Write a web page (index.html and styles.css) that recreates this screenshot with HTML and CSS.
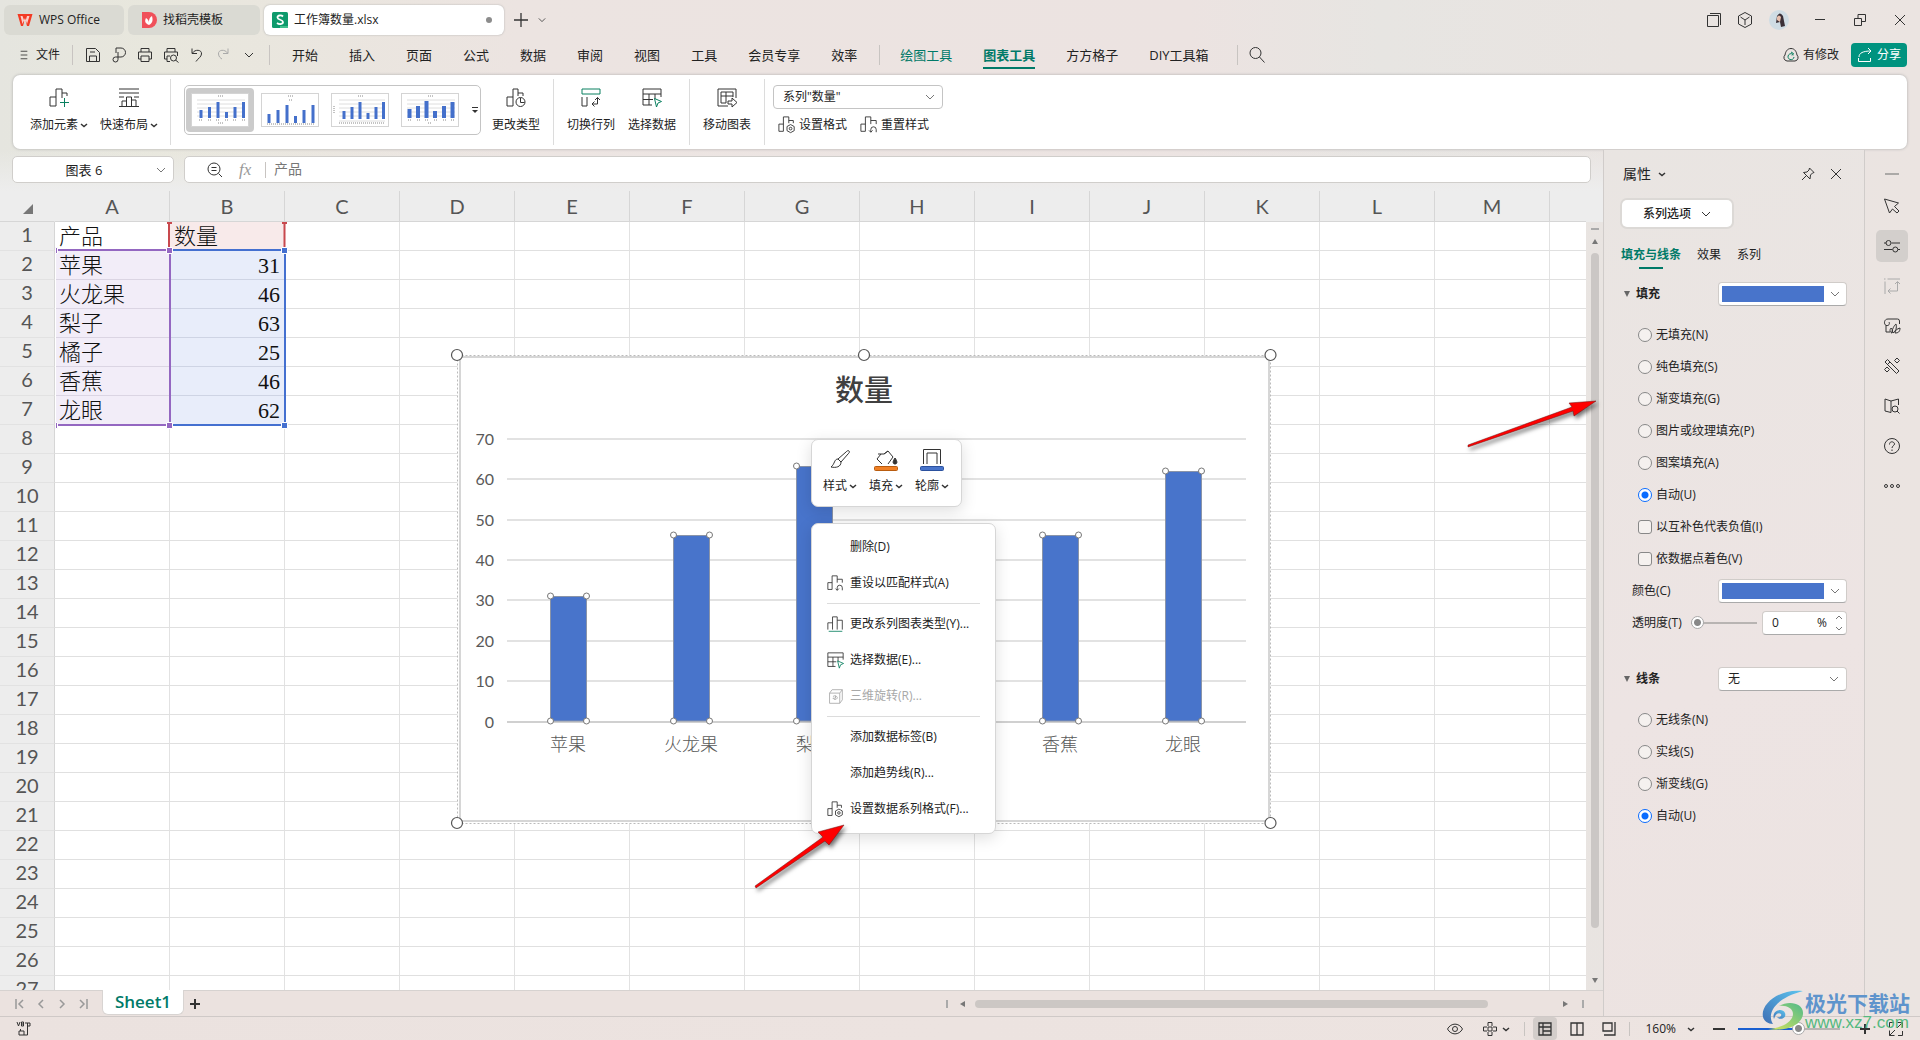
FILE: index.html
```html
<!DOCTYPE html>
<html lang="zh-CN">
<head>
<meta charset="utf-8">
<title>工作簿数量.xlsx</title>
<link rel="stylesheet" href="styles.css">
</head>
<body>
<svg class="defs" aria-hidden="true">
  <symbol id="bars-add" viewBox="0 0 20 20"><path d="M7 18H1V9h6M7 18V1h6v9M13 5h5v3"/><path class="green" d="M15.500 10v9M11 14.500h9"/></symbol>
  <symbol id="layout" viewBox="0 0 20 20"><path d="M0 1h20M0 5h20M0 18.500h20M3 18v-5h4.500M7.500 18V9h5v9M12.500 12H17v6M0 9h5M15 9h5"/></symbol>
  <symbol id="bars-type" viewBox="0 0 20 20"><path d="M7 18H1V9h6M7 18V1h5v7M12 5h5v3"/><circle cx="14.500" cy="14" r="4.500"/><path d="M14.500 10v4.500h4"/></symbol>
  <symbol id="swap" viewBox="0 0 20 20"><path class="green" d="M1 1h18v5H1z"/><path d="M1 9v9h5V9M11 16h5.500V9.500M14 12l2.500-2.500L19 12M13.500 13.500 11 16l2.500 2.500"/></symbol>
  <symbol id="pick" viewBox="0 0 20 20"><path d="M10 17H1V1h18v8M1 6h18M1 11.500h10M7 6v11M13 6v5"/><path class="green" d="m12.500 10.500 7 3-3.500 1.500-1.500 4z"/></symbol>
  <symbol id="move-chart" viewBox="0 0 20 20"><path d="M19 10V1H1v17h10M4 4h12v5M4 4v11h5V8h7M4 8h5M9 4v4M11 13h4v-3l5 4.500-5 4.500v-3h-4z"/></symbol>
  <symbol id="bars-set" viewBox="0 0 20 20"><path d="M6 17H1V9h5M6 17V1h6v7M12 5h5v3"/><path d="m14 9.500 4 2.200v4.600l-4 2.200-4-2.200v-4.600z"/><circle cx="14" cy="14" r="1.500"/></symbol>
  <symbol id="bars-reset" viewBox="0 0 20 20"><path d="M6 17H1V9h5M6 17V1h6v8M12 5h6v4M18 18v-3a3 3 0 0 0-6 0v3M10 16l2 2 2-2"/></symbol>
  <symbol id="bars-green" viewBox="0 0 20 20"><path d="M1 16V8h5.500M6.500 16V1H12v15M12 5h6v11"/><path class="green" d="M2 18h16"/></symbol>
  <symbol id="cube3d" viewBox="0 0 20 20"><path d="M3 6h12v12H3zM3 6l3-4h12l-3 4M18 2v12l-3 4M7 10c2-2 6 0 5 2s-4 2-5 0M10 9v3H7"/></symbol>
  <symbol id="chev" viewBox="0 0 10 10"><path d="m1 3 4 4 4-4"/></symbol>
  <symbol id="caret" viewBox="0 0 8 8"><path class="thick" d="m1 3 3 2.500L7 3"/></symbol>
  <symbol id="close" viewBox="0 0 12 12"><path d="m1 1 10 10M11 1 1 11"/></symbol>
  <symbol id="search" viewBox="0 0 18 18"><circle cx="7.500" cy="7" r="5.500"/><path d="m11.500 11 5 5.500"/></symbol>
</svg>

<header class="titlebar">
  <nav class="doc-tabs" aria-label="文档">
    <button class="doc-tab tab-home"><svg class="ic16" viewBox="0 0 16 16"><path d="M.5 2H13l2.500 0-3.500 12h-2L8 7l-2 7H4z" fill="#f33b24"/><path d="M3.500 4h2L8 11l2-7h2.500l-2.500 8L8 6 5.500 12z" fill="#fff" opacity=".75"/></svg>WPS Office</button>
    <button class="doc-tab tab-docer"><svg class="ic16" viewBox="0 0 16 16"><path d="M1 0h7a8 8 0 0 1 0 16H1z" fill="#f0505a"/><path d="M8 13c-5-2-4-5-3-7 2 1 3 3 3 5 0-3 0-5 3-7 1 4 1 7-3 9z" fill="#fff"/></svg>找稻壳模板</button>
    <button class="doc-tab tab-file active"><svg class="ic16" viewBox="0 0 16 16"><rect width="16" height="16" rx="1.500" fill="#0e9a6c"/><path d="M8 14h8v2H8z" fill="#3fc08d"/><path d="M11 4.500C9.500 3 5.500 3 5.500 5.500S11 7.500 11 10s-4 2.500-6 1" fill="none" stroke="#fff" stroke-width="1.800"/></svg>工作簿数量.xlsx<span class="dot"></span></button>
  </nav>
  <button class="plain" aria-label="新建"><svg class="ic14" viewBox="0 0 14 14"><path class="mid" d="M7 0v14M0 7h14"/></svg></button>
  <button class="plain" aria-label="更多"><svg class="ic8"><use href="#chev"/></svg></button>
  <div class="win-tools">
    <button class="plain w14" aria-label="标签"><svg class="ic14" viewBox="0 0 14 14"><path d="M.5 2.500h11v11H.5zM3 .5h10.500V12"/></svg></button>
    <button class="plain w14" aria-label="应用"><svg class="ic16" viewBox="0 0 16 16"><path d="m8 .5 6.500 3.500v8L8 15.500 1.500 12V4zM3.500 5 8 8l4.500-3M8 8v5"/></svg></button>
    <button class="plain avatar" aria-label="账户"><svg class="ic20" viewBox="0 0 20 20"><circle cx="10" cy="10" r="10" fill="#cfdce4" stroke="none"/><path d="M8 6q3-5 6 0l2 10-4 1-1-5-4 1z" fill="#3a3038" stroke="none"/><path d="M8 7q2-3 4 0l-1 5-3-2z" fill="#e6bfae" stroke="none"/></svg></button>
    <button class="plain" aria-label="最小化"><svg class="ic12" viewBox="0 0 12 12"><path d="M1 5.500h10"/></svg></button>
    <button class="plain" aria-label="还原"><svg class="ic12" viewBox="0 0 12 12"><path d="M.5 4.500h7v7h-7zM4 4.500v-4h7.500v7H8"/></svg></button>
    <button class="plain" aria-label="关闭"><svg class="ic12"><use href="#close"/></svg></button>
  </div>
</header>

<nav class="menubar">
  <button class="plain file-btn"><svg class="ic10" viewBox="0 0 10 12"><path d="M1 1.500h8M1 6h8M1 10.500h8"/></svg>文件</button>
  <span class="vsep"></span>
  <div class="quick">
    <button class="plain" aria-label="保存"><svg class="ic16" viewBox="0 0 16 16"><path d="M1.500 1.500h9l4 4v9h-13zM4.500 14V9h7v5M5 5h5"/></svg></button>
    <button class="plain" aria-label="输出PDF"><svg class="ic16" viewBox="0 0 16 16"><path d="M5 6V1h5a4.500 4.500 0 0 1 0 9H4.500a2.500 2.500 0 1 0 2.500 2.500V5"/></svg></button>
    <button class="plain" aria-label="打印"><svg class="ic16" viewBox="0 0 16 16"><path d="M4 5V1.500h8V5M4 12H1.500V5h13v7H12M4 9h8v5.500H4z"/></svg></button>
    <button class="plain" aria-label="打印预览"><svg class="ic16" viewBox="0 0 16 16"><path d="M4 5V1.500h8V5M4 12H1.500V5h13v4M4 9h3M4 9v5.500h3"/><circle cx="10.500" cy="11" r="3"/><path d="m12.500 13 3 2.500"/></svg></button>
    <button class="plain" aria-label="撤销"><svg class="ic16" viewBox="0 0 16 16"><path d="M3 1.500v5h5M3.500 6C6 2 13 2.500 12.500 7c-.3 3-3 4-5.500 7.500"/></svg></button>
    <button class="plain faint" aria-label="恢复"><svg class="ic16" viewBox="0 0 16 16"><path d="M13 1.500v5H8M12.500 6C10 2 3 2.500 3.500 7c.3 3 2 4 3.500 5"/></svg></button>
    <button class="plain last" aria-label="更多命令"><svg class="ic10"><use href="#chev"/></svg></button>
  </div>
  <span class="vsep"></span>
  <div class="menu-tabs">
    <a href="#">开始</a><a href="#">插入</a><a href="#">页面</a><a href="#">公式</a><a href="#">数据</a><a href="#">审阅</a><a href="#">视图</a><a href="#">工具</a><a href="#">会员专享</a><a href="#">效率</a>
  </div>
  <span class="vsep"></span>
  <div class="menu-tabs ctx">
    <a href="#" class="green-t">绘图工具</a><a href="#" class="green-t current">图表工具</a><a href="#">方方格子</a><a href="#">DIY工具箱</a>
  </div>
  <span class="vsep"></span>
  <button class="plain" aria-label="搜索"><svg class="ic18"><use href="#search"/></svg></button>
  <div class="menu-right">
    <button class="plain changed"><svg class="ic16" viewBox="0 0 16 16"><path d="M4 14a3.500 3.500 0 0 1-2-6C2.500 5 4 1.500 8 1.500S13.500 5 14 8a3.500 3.500 0 0 1-2 6z"/><path class="green" d="M10.500 8a3 3 0 1 0 .5 2M8 5l2.500 1.500L9 8.500"/></svg>有修改</button>
    <button class="share"><svg class="ic16" viewBox="0 0 16 16"><path d="M2 10c0-4 4-6 12-6M11 1l3 3-3 3M1.500 11v3.500h12V11"/></svg>分享</button>
  </div>
</nav>

<section class="ribbon" aria-label="图表工具">
  <button class="rb"><svg class="ic20"><use href="#bars-add"/></svg><span>添加元素<svg class="ic8"><use href="#caret"/></svg></span></button>
  <button class="rb"><svg class="ic20"><use href="#layout"/></svg><span>快速布局<svg class="ic8"><use href="#caret"/></svg></span></button>
  <span class="rsep"></span>
  <div class="gallery">
    <button class="thumb on" aria-label="样式1"><svg viewBox="0 0 56 32"><path class="tl" d="M5 6h48M5 10h48M5 14h48M5 18h48M5 22h48"/><path class="tb" d="M9 24v-8M17.500 24V13M26 24V8M34.500 24v-6M43 24V13M51.500 24V8"/><path class="tx" d="M26 2h5M7 26h4M16 26h4M24 26h4M33 26h4M41 26h4M50 26h4M26 29h6"/></svg></button>
    <button class="thumb" aria-label="样式2"><svg viewBox="0 0 56 32"><path class="tb" d="M7 29v-9M16 29V16M25 29V11M33.500 29v-7M42 29V16M51 29V11"/><path class="tx" d="M26 2h5M27 6h3M5 30h48"/></svg></button>
    <button class="thumb" aria-label="样式3"><svg viewBox="0 0 56 32"><path class="tl" d="M7 6h46M7 10h46M7 14h46M7 18h46M7 22h46M7 27h46"/><path class="tb" d="M12 25v-8M20 25V13M28 25V8M36 25v-6M44 25V13M51.500 25V8"/><path class="tx" d="M26 2h5M2 12v7M7 29h46"/></svg></button>
    <button class="thumb" aria-label="样式4"><svg viewBox="0 0 56 32"><path class="tl" d="M5 6h48M5 10h48M5 14h48M5 18h48M5 22h48"/><path class="tb wide" d="M7.500 24v-9M16 24V12M24.500 24V7M33 24v-7M42 24V12M50.500 24V8"/><path class="tx" d="M26 2h5M6 26h4M15 26h4M23 26h4M32 26h4M41 26h4M49 26h4M26 29h4"/></svg></button>
    <button class="plain gal-more" aria-label="更多样式"><svg class="ic8" viewBox="0 0 8 8"><path d="M1 1.500h6"/><path d="M1 4h6L4 7z" fill="#333" stroke="none"/></svg></button>
  </div>
  <button class="rb"><svg class="ic20"><use href="#bars-type"/></svg><span>更改类型</span></button>
  <span class="rsep"></span>
  <button class="rb"><svg class="ic20"><use href="#swap"/></svg><span>切换行列</span></button>
  <button class="rb"><svg class="ic20"><use href="#pick"/></svg><span>选择数据</span></button>
  <span class="rsep"></span>
  <button class="rb"><svg class="ic20"><use href="#move-chart"/></svg><span>移动图表</span></button>
  <span class="rsep"></span>
  <div class="series">
    <select class="sel" aria-label="图表元素"><option>系列"数量"</option></select>
    <div class="series-btns">
      <button class="plain"><svg class="ic18"><use href="#bars-set"/></svg>设置格式</button>
      <button class="plain"><svg class="ic18"><use href="#bars-reset"/></svg>重置样式</button>
    </div>
  </div>
</section>

<main class="main">
  <section class="book">
    <div class="fbar">
      <select class="sel namebox" aria-label="名称框"><option>图表 6</option></select>
      <div class="formula">
        <svg class="ic16" viewBox="0 0 16 16"><circle cx="7" cy="7" r="6"/><path d="M4.500 5.500h5M4.500 8.500h5M11.500 11.500 15 15"/></svg>
        <span class="fx">fx</span>
        <span class="vsep"></span>
        <input type="text" value="产品" aria-label="编辑栏">
      </div>
    </div>
    <div class="work">
      <div class="viewport">
        <table class="grid">
          <colgroup><col class="rh"><col class="c"><col class="c"><col class="c"><col class="c"><col class="c"><col class="c"><col class="c"><col class="c"><col class="c"><col class="c"><col class="c"><col class="c"><col class="c"><col></colgroup>
          <thead><tr><th class="corner"><svg class="ic10" viewBox="0 0 10 10"><path d="M10 0v10H0z" fill="#777" stroke="none"/></svg></th><th>A</th><th>B</th><th>C</th><th>D</th><th>E</th><th>F</th><th>G</th><th>H</th><th>I</th><th>J</th><th>K</th><th>L</th><th>M</th><th class="rest"></th></tr></thead>
          <tbody>
            <tr><th>1</th><td>产品</td><td class="hd">数量</td><td class="rest" colspan="12"></td></tr>
            <tr><th>2</th><td class="cat">苹果</td><td class="num">31</td><td class="rest" colspan="12"></td></tr>
            <tr><th>3</th><td class="cat">火龙果</td><td class="num">46</td><td class="rest" colspan="12"></td></tr>
            <tr><th>4</th><td class="cat">梨子</td><td class="num">63</td><td class="rest" colspan="12"></td></tr>
            <tr><th>5</th><td class="cat">橘子</td><td class="num">25</td><td class="rest" colspan="12"></td></tr>
            <tr><th>6</th><td class="cat">香蕉</td><td class="num">46</td><td class="rest" colspan="12"></td></tr>
            <tr><th>7</th><td class="cat">龙眼</td><td class="num">62</td><td class="rest" colspan="12"></td></tr>
            <tr><th>8</th><td class="rest" colspan="14"></td></tr>
            <tr><th>9</th><td class="rest" colspan="14"></td></tr>
            <tr><th>10</th><td class="rest" colspan="14"></td></tr>
            <tr><th>11</th><td class="rest" colspan="14"></td></tr>
            <tr><th>12</th><td class="rest" colspan="14"></td></tr>
            <tr><th>13</th><td class="rest" colspan="14"></td></tr>
            <tr><th>14</th><td class="rest" colspan="14"></td></tr>
            <tr><th>15</th><td class="rest" colspan="14"></td></tr>
            <tr><th>16</th><td class="rest" colspan="14"></td></tr>
            <tr><th>17</th><td class="rest" colspan="14"></td></tr>
            <tr><th>18</th><td class="rest" colspan="14"></td></tr>
            <tr><th>19</th><td class="rest" colspan="14"></td></tr>
            <tr><th>20</th><td class="rest" colspan="14"></td></tr>
            <tr><th>21</th><td class="rest" colspan="14"></td></tr>
            <tr><th>22</th><td class="rest" colspan="14"></td></tr>
            <tr><th>23</th><td class="rest" colspan="14"></td></tr>
            <tr><th>24</th><td class="rest" colspan="14"></td></tr>
            <tr><th>25</th><td class="rest" colspan="14"></td></tr>
            <tr><th>26</th><td class="rest" colspan="14"></td></tr>
            <tr><th>27</th><td class="rest" colspan="14"></td></tr>
          </tbody>
        </table>

        <svg class="ranges" width="300" height="250" aria-hidden="true">
          <path d="M55.500 31v206M55.500 57h116" stroke="#fff"/>
          <g stroke="#c8494e" stroke-width="2" fill="none"><path d="M169 32v26M284.500 32v26M167 32h5M282 32h5"/></g>
          <g stroke="#9467c1" stroke-width="2" fill="none"><path d="M56 59h114v175H56"/></g>
          <g stroke="#4470d0" stroke-width="2" fill="none"><path d="M171 59h114v175H171"/></g>
          <g fill="#9467c1" stroke="#fff"><path d="M166.500 56.500h6v6h-6zM166.500 231.500h6v6h-6zM55.500 56.500h2v6h-2zM55.500 231.500h2v6h-2z"/></g>
          <g fill="#4470d0" stroke="#fff"><path d="M281.500 56.500h6v6h-6zM281.500 231.500h6v6h-6z"/></g>
        </svg>

        <!-- chart object floating on the sheet, drawn in window coordinates -->
        <svg class="chart" width="830" height="484" viewBox="450 348 830 484" role="img" aria-label="数量">
          <rect x="457.500" y="355.500" width="813" height="468" fill="#fff" stroke="#bbb" stroke-dasharray="2 2"/>
          <rect x="460" y="357" width="809" height="464" fill="#fff" stroke="#d6d6d6" stroke-width="2"/>
          <path d="M507 439h739M507 479h739M507 520h739M507 560h739M507 600h739M507 641h739M507 681h739" stroke="#e2e2e2" stroke-width="2"/>
          <path d="M507 722h739" stroke="#d0d0d0" stroke-width="2"/>
          <g fill="#4874cb" stroke="#8a94a8">
            <path d="M550.500 596.500h36V721h-36zM673.500 535.500h36V721h-36zM796.500 466.500h36V721h-36zM919.500 621.500h36V721h-36zM1042.500 535.500h36V721h-36zM1165.500 471.500h36V721h-36z"/>
          </g>
          <g class="knobs">
            <circle cx="550.500" cy="596" r="3"/><circle cx="586.500" cy="596" r="3"/><circle cx="550.500" cy="721" r="3"/><circle cx="586.500" cy="721" r="3"/>
            <circle cx="673.500" cy="535" r="3"/><circle cx="709.500" cy="535" r="3"/><circle cx="673.500" cy="721" r="3"/><circle cx="709.500" cy="721" r="3"/>
            <circle cx="796.500" cy="466" r="3"/><circle cx="796.500" cy="721" r="3"/>
            <circle cx="1042.500" cy="535" r="3"/><circle cx="1078.500" cy="535" r="3"/><circle cx="1042.500" cy="721" r="3"/><circle cx="1078.500" cy="721" r="3"/>
            <circle cx="1165.500" cy="471" r="3"/><circle cx="1201.500" cy="471" r="3"/><circle cx="1165.500" cy="721" r="3"/><circle cx="1201.500" cy="721" r="3"/>
          </g>
          <g class="knobs big">
            <circle cx="457" cy="355" r="5.500"/><circle cx="864" cy="355" r="5.500"/><circle cx="1270.500" cy="355" r="5.500"/><circle cx="457" cy="823" r="5.500"/><circle cx="1270.500" cy="823" r="5.500"/>
          </g>
          <text class="ct" x="864" y="401">数量</text>
          <g class="ay"><text x="494" y="445">70</text><text x="494" y="485">60</text><text x="494" y="526">50</text><text x="494" y="566">40</text><text x="494" y="606">30</text><text x="494" y="647">20</text><text x="494" y="687">10</text><text x="494" y="728">0</text></g>
          <g class="ax"><text x="568" y="751">苹果</text><text x="691" y="751">火龙果</text><text x="814" y="751">梨子</text><text x="1060" y="751">香蕉</text><text x="1183" y="751">龙眼</text></g>
        </svg>

        <div class="mini">
          <button class="plain"><svg class="mi" viewBox="0 0 24 24"><path d="M21 3c1 1 0 2-1 3l-7 8-3-3 8-7c1-1 2-2 3-1zM10 11c-4 0-3 5-7 8 5 1 10 0 10-5"/></svg><span>样式<svg class="ic8"><use href="#caret"/></svg></span></button>
          <button class="plain"><svg class="mi" viewBox="0 0 24 24"><path d="M4 6h6l4-3M10 6l4-3 5 6M8 16l-5-5 4-5M19 9l-5 7"/><path d="M21 10c3 4 2 6 0 6s-3-2 0-6z" fill="#333"/><rect x=".5" y="18.500" width="23" height="4" rx="1" fill="#f08025" stroke="#b85c10"/></svg><span>填充<svg class="ic8"><use href="#caret"/></svg></span></button>
          <button class="plain"><svg class="mi" viewBox="0 0 24 24"><path d="M3.500 16V1.500h17V16M7 16V5h10v11"/><rect x=".5" y="18.500" width="23" height="4" rx="1" fill="#4874cb" stroke="#2b519e"/></svg><span>轮廓<svg class="ic8"><use href="#caret"/></svg></span></button>
        </div>

        <div class="ctxmenu" role="menu">
          <button role="menuitem"><i></i>删除(D)</button>
          <button role="menuitem"><svg class="ic18"><use href="#bars-reset"/></svg>重设以匹配样式(A)</button>
          <hr>
          <button role="menuitem"><svg class="ic18"><use href="#bars-green"/></svg>更改系列图表类型(Y)...</button>
          <button role="menuitem"><svg class="ic18"><use href="#pick"/></svg>选择数据(E)...</button>
          <button role="menuitem" disabled><svg class="ic18"><use href="#cube3d"/></svg>三维旋转(R)...</button>
          <hr>
          <button role="menuitem"><i></i>添加数据标签(B)</button>
          <button role="menuitem"><i></i>添加趋势线(R)...</button>
          <button role="menuitem"><svg class="ic18"><use href="#bars-set"/></svg>设置数据系列格式(F)...</button>
        </div>
      </div>
      <div class="vscroll"><span class="dash"></span><span class="up"></span><span class="thumb-v"></span><span class="down"></span></div>
      <svg class="arrows" width="1603" height="799" viewBox="0 191 1603 799" aria-hidden="true">
        <g fill="#fe0000" stroke="#6b1414" stroke-width=".5">
          <path d="m844 825-15 20-4-4-69 47-1-2 68-49-5-5z"/>
          <path d="m1596 401-22 15-1-5-105 36v-2l104-38-3-4z"/>
        </g>
      </svg>
    </div>
    <div class="sheetbar">
      <button class="plain" aria-label="第一张"><svg class="ic10" viewBox="0 0 10 10"><path class="thick" d="M1 0v10M8 1 4 5l4 4"/></svg></button>
      <button class="plain" aria-label="上一张"><svg class="ic10" viewBox="0 0 10 10"><path class="thick" d="M7 1 3 5l4 4"/></svg></button>
      <button class="plain" aria-label="下一张"><svg class="ic10" viewBox="0 0 10 10"><path class="thick" d="m3 1 4 4-4 4"/></svg></button>
      <button class="plain" aria-label="最后一张"><svg class="ic10" viewBox="0 0 10 10"><path class="thick" d="m2 1 4 4-4 4M9 0v10"/></svg></button>
      <button class="sheet">Sheet1</button>
      <button class="plain add" aria-label="新建工作表"><svg class="ic10" viewBox="0 0 10 10"><path class="bold" d="M5 0v10M0 5h10"/></svg></button>
      <div class="hscroll"><span class="bar"></span><span class="left"></span><span class="thumb-h"></span><span class="right"></span><span class="bar"></span></div>
    </div>
  </section>

  <aside class="panel">
    <header><h2>属性</h2><svg class="ic8"><use href="#caret"/></svg>
      <button class="plain pin" aria-label="固定"><svg class="ic14" viewBox="0 0 14 14"><path d="m8.500 1 4.500 4.500-1.500.5-2 2-.5 4L2.500 5.500 6 5l2-2zM5.500 8.500 1 13"/></svg></button>
      <button class="plain" aria-label="关闭"><svg class="ic12"><use href="#close"/></svg></button></header>
    <button class="opt-btn">系列选项<svg class="ic10"><use href="#chev"/></svg></button>
    <nav class="ptabs"><a href="#" class="current">填充与线条</a><a href="#">效果</a><a href="#">系列</a></nav>

    <fieldset class="group">
      <div class="row head"><span class="tri"></span><h3>填充</h3><select class="sel swatch" aria-label="填充"><option></option></select></div>
      <label class="choice"><input type="radio" name="fill">无填充(N)</label>
      <label class="choice"><input type="radio" name="fill">纯色填充(S)</label>
      <label class="choice"><input type="radio" name="fill">渐变填充(G)</label>
      <label class="choice"><input type="radio" name="fill">图片或纹理填充(P)</label>
      <label class="choice"><input type="radio" name="fill">图案填充(A)</label>
      <label class="choice"><input type="radio" name="fill" checked>自动(U)</label>
      <label class="choice"><input type="checkbox">以互补色代表负值(I)</label>
      <label class="choice"><input type="checkbox">依数据点着色(V)</label>
      <div class="row"><label for="color">颜色(C)</label><select id="color" class="sel swatch"><option></option></select></div>
      <div class="row"><label for="alpha">透明度(T)</label><input id="alpha" type="range" value="0"><span class="spin"><input type="text" value="0" aria-label="透明度数值"><span>%</span><svg class="sp" viewBox="0 0 8 16"><path d="m1 4 3-3 3 3M1 12l3 3 3-3"/></svg></span></div>
    </fieldset>
    <fieldset class="group line">
      <div class="row head"><span class="tri"></span><h3>线条</h3><select class="sel" aria-label="线条"><option>无</option></select></div>
      <label class="choice"><input type="radio" name="line">无线条(N)</label>
      <label class="choice"><input type="radio" name="line">实线(S)</label>
      <label class="choice"><input type="radio" name="line">渐变线(G)</label>
      <label class="choice"><input type="radio" name="line" checked>自动(U)</label>
    </fieldset>
  </aside>

  <nav class="side" aria-label="侧边栏">
    <button class="plain fold" aria-label="收起"><svg class="ic14" viewBox="0 0 14 14"><path class="mid" d="M0 7h14"/></svg></button>
    <button class="plain" aria-label="选择"><svg class="ic16" viewBox="0 0 16 16"><path d="m.5 1 14 4-4 3.500 4.500 4.500-2 2L8.500 11l-3 4z"/></svg></button>
    <button class="plain on" aria-label="属性"><svg class="ic16" viewBox="0 0 16 16"><path d="M0 5h2M7.500 5H16M0 11.500h8.500M14 11.500h2"/><circle cx="4.500" cy="5" r="2.500"/><circle cx="11.300" cy="11.500" r="2.500"/></svg></button>
    <button class="plain faint" aria-label="切换"><svg class="ic16" viewBox="0 0 16 16"><path d="M3.500 1H16M1 3.500V16M0 1h1.500M4 13h9.500V4M11 6l2.500-2.500L16 6M6.500 10.500 4 13l2.500 2.500"/></svg></button>
    <button class="plain" aria-label="稻壳"><svg class="ic16" viewBox="0 0 16 16"><path d="M15.500 6V3q0-2-2-2H4C0 1-.5 6 2 7.500V14h4M2 7.500C5 8 6 6 5 4M8 15c-3-1-2-4-1-5 2 2 2 4 1 5s1-7 4-9c1 4 0 7-3 9M11 15c0-3 2-4 5-5 0 4-2 5-5 5z"/></svg></button>
    <button class="plain" aria-label="智能工具"><svg class="ic16" viewBox="0 0 16 16"><path d="m1 4 2.500-2.500L15 13l-2.500 2.500zM3.500 6.500 6 4M13 0l2.500 2.500L13 5l-2.500-2.500zM3 9l2.500 2.500L3 14 .5 11.500z"/></svg></button>
    <button class="plain" aria-label="帮助文档"><svg class="ic16" viewBox="0 0 16 16"><path d="M7 14.500 1 13V1l6 2 7.500-2v6M7 3v11.500"/><circle cx="11" cy="11" r="3"/><path d="m13 13 2.500 2.500"/></svg></button>
    <button class="plain" aria-label="帮助"><svg class="ic16" viewBox="0 0 16 16"><circle cx="8" cy="8" r="7.500"/><path d="M5.500 6.500c0-4 5-3 5-.5 0 1.500-2.500 2-2.500 4M8 11.500V13"/></svg></button>
    <button class="plain" aria-label="更多"><svg class="ic16" viewBox="0 0 16 16"><circle cx="2" cy="8" r="1.500"/><circle cx="8" cy="8" r="1.500"/><circle cx="14" cy="8" r="1.500"/></svg></button>
  </nav>
</main>

<footer class="status">
  <button class="plain" aria-label="宏"><svg class="ic14" viewBox="0 0 14 14"><path d="m0 0 1.500 4L3 0M4.500 0v4h2V0zM4.500 2h2M8 1h5v3h-3M10.500 1v12H2V9h5v4M3.500 9V7"/></svg></button>
  <div class="status-tools">
    <button class="plain" aria-label="护眼"><svg class="ic16" viewBox="0 0 16 16"><path d="M.5 8C4 1.500 12 1.500 15.500 8 12 14.500 4 14.500.5 8z"/><circle cx="8" cy="8" r="2.500"/></svg></button>
    <button class="plain" aria-label="阅读模式"><svg class="ic14" viewBox="0 0 14 14"><path d="M5 4V.5h4V4M5 10v3.500h4V10M4 5H.5v4H4M10 5h3.500v4H10M5 5h4v4H5z"/></svg><svg class="ic8"><use href="#caret"/></svg></button>
    <span class="vsep"></span>
    <button class="plain view on" aria-label="普通视图"><svg class="ic14" viewBox="0 0 14 14"><path class="mid" d="M1 1h12v12H1zM1 5h12M5 1v12M5 9h8"/></svg></button>
    <button class="plain view" aria-label="分页预览"><svg class="ic14" viewBox="0 0 14 14"><path class="mid" d="M1 1h12v12H1zM7 1v12"/></svg></button>
    <button class="plain view" aria-label="页面布局"><svg class="ic14" viewBox="0 0 14 14"><path class="mid" d="M1 1h9v8H1zM13 0v13H2"/></svg></button>
    <span class="vsep"></span>
    <button class="plain zoomv">160%<svg class="ic8"><use href="#caret"/></svg></button>
    <button class="plain" aria-label="缩小"><svg class="ic12" viewBox="0 0 12 12"><path class="bold" d="M0 6h12"/></svg></button>
    <input type="range" class="zoom" value="61" aria-label="缩放">
    <button class="plain" aria-label="放大"><svg class="ic10" viewBox="0 0 10 10"><path class="bold" d="M5 0v10M0 5h10"/></svg></button>
    <button class="plain full" aria-label="全屏"><svg class="ic14" viewBox="0 0 14 14"><path d="M8.500.5h5v5M13.500.5 8 6M5.500 13.500h-5v-5M.5 13.500 6 8M.5 5V.5H5M13.500 9v4.500H9"/></svg></button>
  </div>
  <div class="mark">
    <svg width="42" height="42" viewBox="0 0 42 42"><defs><linearGradient id="g1" x1="0" y1="1" x2="1" y2="0"><stop offset="0" stop-color="#3f6fb5"/><stop offset="1" stop-color="#5cc4ee"/></linearGradient><linearGradient id="g2" x1="0" y1="1" x2="1" y2="0"><stop offset="0" stop-color="#d8e45c"/><stop offset="1" stop-color="#4fb98a"/></linearGradient></defs><path d="M41 1C18-2-2 14 1 27c1 4 5 7 10 7C4 23 14 8 41 1z" fill="url(#g1)"/><path d="M17 16c10-6 25-3 24 8S24 42 6 39c15-1 25-8 25-15 0-6-7-9-14-8z" fill="url(#g2)"/><path d="M12 29c-3-8 8-12 11-6 2 5-5 8-8 4 3 1 5-1 4-3-3-2-6 1-7 5z" fill="url(#g1)"/></svg>
    <p>极光下载站<small>www.xz7.com</small></p>
  </div>
</footer>
</body>
</html>
```
FILE: styles.css
```css
* { box-sizing: border-box; }

body {
  margin: 0;
  height: 100vh;
  display: flex;
  flex-direction: column;
  overflow: hidden;
  font: 12px/16px "Open Sans", "Noto Sans CJK SC", sans-serif;
  color: #222;
  background: linear-gradient(90deg, #e5e5df 0, #e8e7dd 8%, #ece4e1 27%, #ece3e1 62%, #e7e5e2 72%, #e9e4e1 85%, #ebe4e1 100%);
}

button, input, select { font: inherit; color: inherit; margin: 0; }
button { padding: 0; border: 0; background: none; display: flex; align-items: center; white-space: nowrap; }
a { color: inherit; text-decoration: none; }
h2, h3, p { margin: 0; }
fieldset { border: 0; margin: 0; padding: 0; min-width: 0; }

svg { fill: none; stroke: #333; stroke-width: 1; flex: none; overflow: visible; }
.defs { position: absolute; width: 0; height: 0; }
.green { stroke: #0a8060; }
.thick { stroke-width: 1.5; }
.mid { stroke-width: 1.3; }
.bold { stroke-width: 2; }
.ic8 { width: 8px; height: 8px; }
.ic10 { width: 10px; height: 10px; }
.ic12 { width: 12px; height: 12px; }
.ic14 { width: 14px; height: 14px; }
.ic16 { width: 16px; height: 16px; }
.ic18 { width: 18px; height: 18px; }
.ic20 { width: 20px; height: 20px; }
.faint svg { stroke: #aaa; }
.vsep { width: 1px; height: 16px; background: #c8c4c1; flex: none; }

/* title bar */
.titlebar { height: 40px; flex: none; display: flex; align-items: center; padding: 0 14px 0 4px; gap: 10px; }
.doc-tabs { display: flex; gap: 4px; }
.doc-tab { height: 30px; border-radius: 6px; background: #dadad3; gap: 6px; padding: 0 13px; }
.doc-tab svg { stroke: none; }
.tab-home { width: 120px; }
.tab-docer { width: 132px; }
.tab-file { width: 240px; padding: 0 12px 0 8px; background: #fff; box-shadow: 0 0 2px #aaa; }
.dot { width: 6px; height: 6px; border-radius: 50%; background: #8c8c8c; margin-left: auto; }
.win-tools { margin-left: auto; display: flex; align-items: center; gap: 28px; }
.win-tools .w14 { margin-right: -12px; }
.win-tools .avatar { margin-right: -3px; }

/* menu bar */
.menubar { height: 30px; flex: none; display: flex; align-items: center; padding: 0 13px 0 19px; }
.file-btn { gap: 7px; margin-right: 12px; }
.quick { display: flex; align-items: center; gap: 10px; margin: 0 15px 0 12px; }
.quick .last { margin-left: 3px; }
.menu-tabs { display: flex; gap: 31px; margin: 0 22px; font-size: 13px; line-height: 24px; }
.menu-tabs.ctx { margin: 0 28px 0 20px; }
.menubar .vsep { height: 20px; }
.green-t { color: #007a68; }
.menu-tabs .current { font-weight: 700; box-shadow: 0 2px #007a68; height: 24px; }
.menubar > .plain:nth-of-type(2) { margin-left: 10px; }
.menu-right { margin-left: auto; display: flex; align-items: center; gap: 12px; }
.changed { gap: 4px; }
.share { height: 24px; border-radius: 4px; background: #00937f; color: #fff; padding: 0 6px; gap: 4px; width: 56px; }
.share svg { stroke: #fff; }

/* ribbon */
.ribbon {
  flex: none; height: 74px; margin: 5px 13px 1px; padding: 4px 0;
  display: flex; align-items: stretch;
  background: #fff; border-radius: 7px; box-shadow: 0 0 3px #aaa;
}
.rb { flex-direction: column; gap: 9px; padding: 9px 0 0; width: 48px; margin-left: 13px; }
.rb span { display: flex; align-items: center; gap: 2px; line-height: 16px; }
.rb:nth-child(1) { width: 58px; margin-left: 17px; }
.rb:nth-child(2) { width: 58px; margin-left: 12px; }
.rb:nth-child(2) + .rsep { margin-left: 12px; }
.rb + .rsep { margin-left: 13px; }
.rsep { width: 1px; height: 66px; background: #dcdcdc; flex: none; }
.gallery { height: 50px; margin: 6px 0 0 13px; border: 1px solid #c4c4c4; border-radius: 5px; display: flex; align-items: center; padding: 0 1px; }
.gallery + .rb { margin-left: 11px; }
.gal-more { margin-left: 5px; }
.thumb { width: 68px; height: 44px; border-radius: 4px; justify-content: center; margin-right: 2px; }
.thumb.on { background: #cbcbcb; }
.thumb svg { width: 56px; height: 32px; background: #fff; outline: 1px solid #d4d4d4; }
.tl { stroke: #dedede; }
.tb { stroke: #4470cb; stroke-width: 3; }
.tb.wide { stroke-width: 4; }
.tx { stroke: #888; stroke-dasharray: 1 1; }
.series { margin: 6px 0 0 8px; }
.sel {
  appearance: none; display: block; height: 24px; width: 170px; border: 1px solid #c4c4c4; border-radius: 4px; padding: 0 9px;
  background: #fff url("data:image/svg+xml,%3Csvg xmlns='http://www.w3.org/2000/svg' width='10' height='6'%3E%3Cpath d='m1 1 4 4 4-4' fill='none' stroke='%23777'/%3E%3C/svg%3E") no-repeat right 7px center;
}
.series-btns { display: flex; gap: 13px; margin: 7px 0 0 5px; }
.series-btns .plain { gap: 3px; line-height: 18px; }

/* workbook */
.main { flex: 1; min-height: 0; display: flex; }
.book { flex: 1; min-width: 0; display: flex; flex-direction: column; }
.fbar { flex: none; display: flex; gap: 10px; padding: 6px 12px 8px; background: linear-gradient(#ededed00, #ededed); }
.namebox { width: 162px; height: 27px; border-color: #d0cecb; border-radius: 5px; font-size: 13px; text-align: center; text-align-last: center; padding: 0 18px 0 0; }
.formula { flex: 1; height: 27px; display: flex; align-items: center; background: #fff; border: 1px solid #d0cecb; border-radius: 5px; padding-left: 22px; }
.fx { margin: 0 14px 0 16px; font: italic 17px/20px "Liberation Serif", serif; color: #999; width: 12px; }
.formula input { flex: 1; border: 0; background: none; padding: 0 8px 2px; font-size: 14px; color: #777; outline: 0; }
.work { flex: 1; min-height: 0; display: flex; position: relative; }
.viewport { flex: 1; min-width: 0; overflow: hidden; position: relative; background: #fff; }

.grid { table-layout: fixed; width: 100%; border-collapse: separate; border-spacing: 0; }
.grid col.rh { width: 55px; }
.grid col.c { width: 115px; }
.grid th, .grid td { padding: 0; height: 29px; line-height: 26px; border: solid #e0e0e0; border-width: 0 1px 1px 0; overflow: hidden; white-space: nowrap; }
.grid th { background: #ededed; font: 400 20px/24px Lato, sans-serif; color: #555; }
.grid tbody th { border-bottom-color: #e2e2e2; border-right-color: #d6d6d6; padding-bottom: 4px; }
.grid thead th { height: 31px; border-color: #d6d6d6; padding-bottom: 1px; }
.grid thead .corner { text-align: right; padding: 0 21px 0 0; border-right-color: #ededed; line-height: 20px; }
.grid td { font: 300 22px/26px "Liberation Serif", "Noto Sans CJK SC", serif; color: #111; padding: 2px 0 0 4px; }
.grid td.hd { background: #f8eaea; }
.grid td.cat { background: #f2edf8; border-color: #dbd5e3; }
.grid td.num { background: #e8edfa; border-color: #ced4e4; text-align: right; padding: 2px 4px 0 0; }
.grid td.rest { border-right: 0; background: repeating-linear-gradient(90deg, transparent 0 114px, #e2e2e2 114px 115px); }
.grid th.rest { border-right: 0; }

.ranges { position: absolute; left: 0; top: 0; }
.chart { position: absolute; left: 450px; top: 157px; }
.chart text { stroke: none; }
.knobs { fill: #fff; stroke: #777; }
.knobs.big { stroke: #555; stroke-width: 1.2; }
.ct { font: 500 29px "Noto Sans CJK SC", sans-serif; fill: #404040; text-anchor: middle; }
.ay { font: 16px Lato, sans-serif; fill: #595959; text-anchor: end; }
.ax { font: 300 18px "Noto Sans CJK SC", sans-serif; fill: #595959; text-anchor: middle; }
.arrows { position: absolute; left: 0; top: 0; filter: drop-shadow(2px 3px 2px #0008); pointer-events: none; }

.mini, .ctxmenu { position: absolute; left: 811px; background: #fff; border: 1px solid #d6d6d6; border-radius: 7px; box-shadow: 0 4px 16px #0002; }
.mini { top: 248px; width: 151px; height: 68px; display: flex; gap: 12px; padding: 8px 11px; }
.mini .plain { flex-direction: column; gap: 6px; width: 34px; }
.mi { width: 24px; height: 24px; }
.mini span { display: flex; align-items: center; gap: 2px; }
.ctxmenu { top: 332px; width: 185px; padding: 5px 15px 6px; }
.ctxmenu button { height: 36px; width: 100%; gap: 6px; }
.ctxmenu .ic18, .ctxmenu i { width: 17px; height: 17px; }
.ctxmenu button:disabled { color: #a8a8a8; }
.ctxmenu button:disabled svg { stroke: #a8a8a8; }
.ctxmenu hr { border: 0; height: 1px; margin: 2px 0; background: #dcdcdc; }

.vscroll { width: 17px; flex: none; display: flex; flex-direction: column; align-items: center; padding: 37px 0 7px; background: linear-gradient(#ededed 31px, transparent 31px); }
.dash { width: 8px; height: 2px; background: #aaa; }
.up, .down { border: solid transparent; border-width: 0 3px; }
.up { border-bottom: 5px solid #777; margin: 9px 0; }
.down { border-top: 5px solid #777; }
.thumb-v { width: 8px; flex: 0 1 675px; border-radius: 4px; background: #cbc7c5; margin-bottom: auto; }

.sheetbar { height: 26px; flex: none; display: flex; border-top: 1px solid #d6d2d0; padding: 0 19px 0 15px; background: #ebe2df; }
.sheetbar > .plain { width: 10px; margin-right: 11px; }
.sheetbar > .plain svg { stroke: #999; }
.sheet { margin: -1px 0 0 3px; height: 25px; width: 82px; justify-content: center; background: #fff; border: 1px solid #d8d4d2; border-top: 0; border-radius: 0 0 6px 6px; font-size: 17px; line-height: 22px; font-weight: 600; color: #007a68; }
.sheetbar > .add { margin-left: 6px; }
.sheetbar > .add svg { stroke: #333; }
.hscroll { margin-left: auto; width: 638px; display: flex; align-items: center; }
.bar { width: 2px; height: 8px; background: #aaa; }
.left, .right { border: solid transparent; border-width: 3px 0; }
.left { border-right: 5px solid #777; margin: 0 10px 0 12px; }
.right { border-left: 5px solid #777; margin: 0 14px 0 auto; }
.thumb-h { width: 513px; height: 8px; border-radius: 4px; background: #ccc7c4; }

/* properties panel */
.panel { width: 261px; flex: none; border-left: 1px solid #d0ccca; padding: 12px 17px 0 18px; background: linear-gradient(160deg, #e9e5e2, #ede4e3 60%, #ece3e1); }
.panel header { display: flex; align-items: center; height: 24px; margin-left: 1px; gap: 7px; }
.panel h2 { font-size: 14px; font-weight: 400; }
.panel header .pin { margin-left: auto; margin-right: 8px; }
.panel header .plain:last-child { margin-right: 5px; }
.opt-btn { margin: 14px 0 0; height: 27px; width: 110px; justify-content: center; gap: 10px; background: #fff; border-radius: 5px; box-shadow: 0 0 0 2px #dcd9d6; font-weight: 500; }
.ptabs { display: flex; gap: 16px; margin: 18px 0 0 -1px; line-height: 20px; }
.ptabs .current { font-weight: 700; color: #007a68; position: relative; }
.ptabs .current::after { content: ""; position: absolute; left: 18px; right: 18px; bottom: -4px; height: 2px; background: #007a68; }
.group { margin-top: 13px; }
.group.line { margin-top: 24px; }
.row { display: flex; align-items: center; height: 32px; padding-left: 10px; }
.row.head { padding-left: 2px; margin-bottom: 9px; }
.tri { border: solid transparent; border-width: 6px 3px 0; border-top-color: #666; margin-right: 6px; }
.panel h3 { font-size: 12px; font-weight: 700; }
.panel .sel { width: 129px; height: 24px; margin-left: auto; border-color: #d0ccc9; border-bottom-color: #aaa; }
.panel .swatch {
  background: url("data:image/svg+xml,%3Csvg xmlns='http://www.w3.org/2000/svg' width='10' height='6'%3E%3Cpath d='m1 1 4 4 4-4' fill='none' stroke='%23777'/%3E%3C/svg%3E") no-repeat right 6px center, linear-gradient(#4874cb, #4874cb) no-repeat 3px 3px / 102px 16px, #fff;
}
.choice { display: flex; align-items: center; gap: 4px; height: 32px; padding-left: 16px; }
.choice input { appearance: none; width: 14px; height: 14px; border: 1px solid #888; border-radius: 50%; background: #f5f1ef; }
.choice input[type="checkbox"] { border-radius: 3px; }
.choice input:checked { border-color: #0a6cff; background: radial-gradient(circle, #0a6cff 3px, #fff 4px); }
input[type="range"] { appearance: none; background: none; height: 14px; }
input[type="range"]::-webkit-slider-runnable-track { height: 2px; background: #b8b4b2; }
input[type="range"]::-webkit-slider-thumb { appearance: none; width: 13px; height: 13px; margin-top: -6px; border-radius: 50%; border: 1px solid #aaa; background: radial-gradient(circle, #888 3px, #fff 4px); }
#alpha { width: 66px; margin-left: 9px; }
.spin { width: 85px; height: 24px; margin-left: auto; display: flex; align-items: center; background: #fff; border: 1px solid #d0ccc9; border-bottom-color: #aaa; border-radius: 4px; padding: 0 3px 0 9px; }
.spin input { flex: 1; min-width: 0; border: 0; padding: 0; background: none; }
.sp { width: 8px; height: 16px; margin-left: 8px; stroke: #777; }

/* side rail */
.side { width: 56px; flex: none; border-left: 1px solid #d0ccca; display: flex; flex-direction: column; align-items: center; gap: 8px; padding: 16px 2px 16px 0; }
.side .plain { width: 32px; height: 32px; justify-content: center; border-radius: 5px; }
.side .fold { height: 16px; }
.side .fold svg { stroke: #888; }
.side .on { background: #d3cfcc; }

/* status bar */
.status { height: 24px; flex: none; border-top: 1px solid #cfc9c7; display: flex; align-items: center; padding: 0 17px; background: linear-gradient(90deg, #ebe2df, #ede4e1); position: relative; }
.status-tools { margin-left: auto; display: flex; align-items: center; }
.status-tools > .plain:nth-child(2) { gap: 5px; margin: 0 14px 0 20px; }
.status .vsep { height: 14px; }
.view { width: 24px; height: 23px; justify-content: center; margin-left: 8px; border-radius: 4px; }
.view.on { background: #d3cdca; }
.view + .vsep { margin-left: 8px; }
.zoomv { gap: 11px; margin: 0 18px 0 15px; }
.zoom { width: 102px; margin: 0 20px 0 13px; }
.zoom::-webkit-slider-runnable-track { background: linear-gradient(90deg, #1a5fd0 60%, #b8b4b2 60%) !important; }
.full { margin-left: 19px; }
.mark { position: absolute; right: 10px; bottom: 8px; display: flex; align-items: flex-end; }
.mark svg { stroke: none; }
.mark p { font: 700 21px/24px "Noto Sans CJK SC", sans-serif; color: #5f94cc; margin: 0 0 0 1px; }
.mark small { display: block; font: 400 17px/18px "Liberation Sans", sans-serif; color: #55b980; }
```
